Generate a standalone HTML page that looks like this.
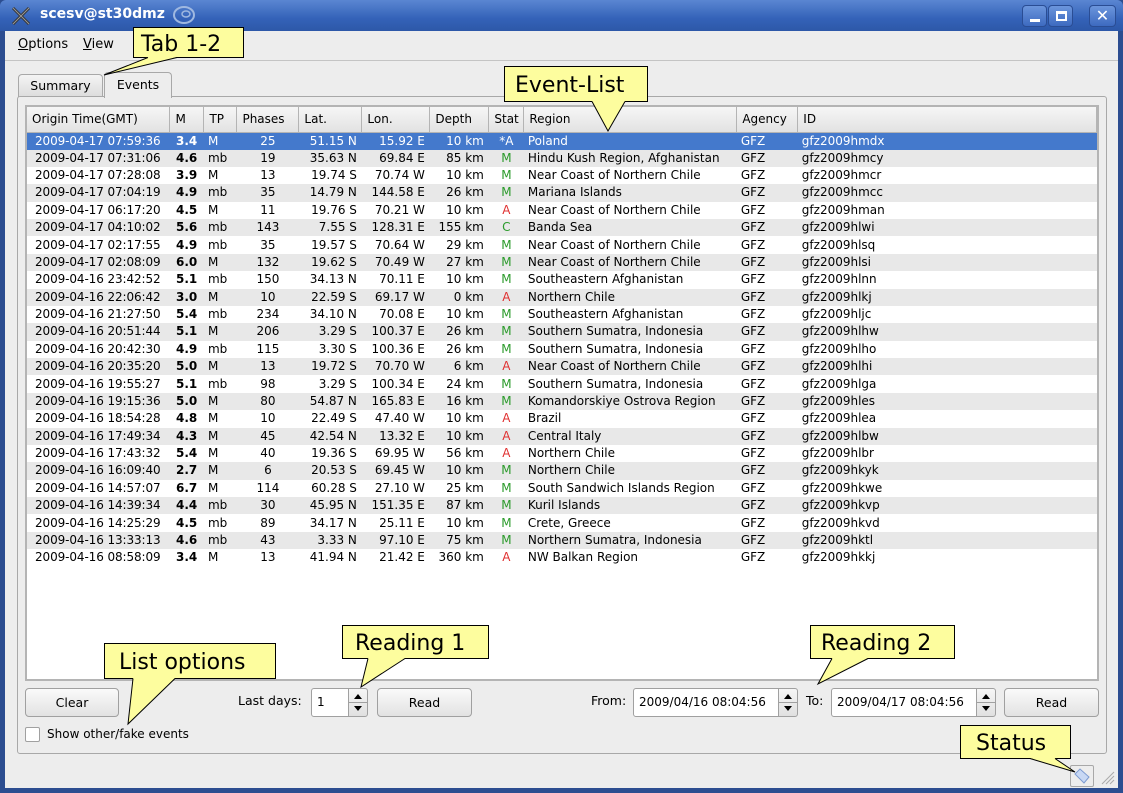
<!DOCTYPE html>
<html><head><meta charset="utf-8"><style>
*{box-sizing:border-box;margin:0;padding:0}
body{width:1123px;height:793px;overflow:hidden;background:#2c4d90;font-family:"DejaVu Sans","Liberation Sans",sans-serif;position:relative}
.abs{position:absolute}
#title{left:0;top:0;width:1123px;height:31px;background:linear-gradient(#5a86d2,#3462b8 60%,#2d58a8);border-radius:6px 6px 0 0}
#client{left:5px;top:31px;width:1113px;height:757px;background:#ededed}
.menu{font-size:13px;color:#000;top:37px}
#menuline{left:5px;top:60px;width:1113px;height:1px;background:#c4c4c4}
.tab{border:1px solid #a8a8a8;border-bottom:none;border-radius:4px 4px 0 0;font-size:12.5px;text-align:center}
#frame{left:17px;top:96px;width:1090px;height:658px;border:1px solid #a8a8a8;border-radius:3px;background:#ededed}
#tbl{left:25px;top:105px;width:1074px;height:576px;border:2px solid #b4b4b4;background:#fff;overflow:hidden}
table{border-collapse:collapse;table-layout:fixed;font-size:12px;position:absolute;left:0;top:0}
th{height:25px;font-weight:normal;text-align:left;padding-left:5px;background:linear-gradient(#f6f6f6,#e2e2e2);border-right:1px solid #b4b4b4;border-bottom:1px solid #b4b4b4;white-space:nowrap}
td{height:17.38px;white-space:nowrap;padding:0 4px;overflow:hidden;line-height:17px}
tr.o td{background:#e8e8e8}
tr.s td{background:#4479cc;color:#fff}
td.t{padding-left:8px;letter-spacing:-0.1px}
td.m{font-weight:bold;padding-left:6px}
td.c{text-align:center}
td.r{text-align:right;padding-right:5px}
td.g{color:#2a9a2a;text-align:center}
td.a{color:#e03030;text-align:center}
tr.s td.g,tr.s td.a{color:#fff}
.btn{height:29px;border:1px solid #a0a0a0;border-radius:4px;background:linear-gradient(#fafafa,#e2e2e2);font-size:12.5px;text-align:center;line-height:27px}
.inp{height:29px;border:1px solid #a0a0a0;border-radius:3px;background:#fff;font-size:12px;line-height:27px;padding-left:5px;white-space:nowrap;overflow:hidden}
.spin{width:20px;height:29px;border:1px solid #a0a0a0;border-radius:0 3px 3px 0;background:linear-gradient(#f6f6f6,#e0e0e0)}
.lbl{font-size:12.5px}
</style></head><body>
<div id="title" class="abs"></div>
<svg class="abs" style="left:10px;top:5px" width="22" height="22"><path d="M3 3 L19 19 M19 3 L3 19" stroke="#333" stroke-width="3"/><path d="M3 3 L19 19 M19 3 L3 19" stroke="#999" stroke-width="1"/></svg>
<div class="abs" style="left:40px;top:6px;color:#fff;font-weight:bold;font-size:14px">scesv@st30dmz</div>
<svg class="abs" style="left:172px;top:5px" width="24" height="20"><ellipse cx="12" cy="10" rx="10" ry="8" fill="none" stroke="#9fb8e0" stroke-width="2"/><ellipse cx="14" cy="9" rx="4" ry="3" fill="none" stroke="#9fb8e0" stroke-width="1.5"/></svg>
<div class="abs" style="left:1022px;top:5px;width:25px;height:22px;border:1px solid #2a4d94;border-radius:4px;background:linear-gradient(#6b95dc,#3d6ac0)"><div style="position:absolute;left:7px;top:13px;width:10px;height:3px;background:#fff"></div></div>
<div class="abs" style="left:1048px;top:5px;width:25px;height:22px;border:1px solid #2a4d94;border-radius:4px;background:linear-gradient(#6b95dc,#3d6ac0)"><div style="position:absolute;left:7px;top:5px;width:11px;height:10px;border:2px solid #fff;border-top-width:3px"></div></div>
<div class="abs" style="left:1089px;top:5px;width:27px;height:22px;border:1px solid #2a4d94;border-radius:4px;background:linear-gradient(#6b95dc,#3d6ac0);color:#fff;font-weight:bold;font-size:16px;text-align:center;line-height:20px">✕</div>
<div id="client" class="abs"></div>
<div class="abs menu" style="left:18px"><u>O</u>ptions</div>
<div class="abs menu" style="left:83px"><u>V</u>iew</div>
<div id="menuline" class="abs"></div>
<div class="abs tab" style="left:18px;top:74px;width:85px;height:23px;background:linear-gradient(#f4f4f4,#dcdcdc);line-height:22px">Summary</div>
<div id="frame" class="abs"></div>
<div class="abs tab" style="left:104px;top:72px;width:68px;height:26px;background:#ededed;line-height:23px">Events</div>
<div id="tbl" class="abs">
<table>
<colgroup><col style="width:143px"><col style="width:34px"><col style="width:33px"><col style="width:62px"><col style="width:63px"><col style="width:68px"><col style="width:59px"><col style="width:35px"><col style="width:213px"><col style="width:61px"><col style="width:299px"></colgroup>
<tr><th>Origin Time(GMT)</th><th>M</th><th>TP</th><th>Phases</th><th>Lat.</th><th>Lon.</th><th>Depth</th><th>Stat</th><th>Region</th><th>Agency</th><th>ID</th></tr>
<tr class="s"><td class="t">2009-04-17 07:59:36</td><td class="m">3.4</td><td>M</td><td class="c">25</td><td class="r">51.15 N</td><td class="r">15.92 E</td><td class="r">10 km</td><td class="c">*A</td><td>Poland</td><td>GFZ</td><td>gfz2009hmdx</td></tr>
<tr class="o"><td class="t">2009-04-17 07:31:06</td><td class="m">4.6</td><td>mb</td><td class="c">19</td><td class="r">35.63 N</td><td class="r">69.84 E</td><td class="r">85 km</td><td class="g">M</td><td>Hindu Kush Region, Afghanistan</td><td>GFZ</td><td>gfz2009hmcy</td></tr>
<tr><td class="t">2009-04-17 07:28:08</td><td class="m">3.9</td><td>M</td><td class="c">13</td><td class="r">19.74 S</td><td class="r">70.74 W</td><td class="r">10 km</td><td class="g">M</td><td>Near Coast of Northern Chile</td><td>GFZ</td><td>gfz2009hmcr</td></tr>
<tr class="o"><td class="t">2009-04-17 07:04:19</td><td class="m">4.9</td><td>mb</td><td class="c">35</td><td class="r">14.79 N</td><td class="r">144.58 E</td><td class="r">26 km</td><td class="g">M</td><td>Mariana Islands</td><td>GFZ</td><td>gfz2009hmcc</td></tr>
<tr><td class="t">2009-04-17 06:17:20</td><td class="m">4.5</td><td>M</td><td class="c">11</td><td class="r">19.76 S</td><td class="r">70.21 W</td><td class="r">10 km</td><td class="a">A</td><td>Near Coast of Northern Chile</td><td>GFZ</td><td>gfz2009hman</td></tr>
<tr class="o"><td class="t">2009-04-17 04:10:02</td><td class="m">5.6</td><td>mb</td><td class="c">143</td><td class="r">7.55 S</td><td class="r">128.31 E</td><td class="r">155 km</td><td class="g">C</td><td>Banda Sea</td><td>GFZ</td><td>gfz2009hlwi</td></tr>
<tr><td class="t">2009-04-17 02:17:55</td><td class="m">4.9</td><td>mb</td><td class="c">35</td><td class="r">19.57 S</td><td class="r">70.64 W</td><td class="r">29 km</td><td class="g">M</td><td>Near Coast of Northern Chile</td><td>GFZ</td><td>gfz2009hlsq</td></tr>
<tr class="o"><td class="t">2009-04-17 02:08:09</td><td class="m">6.0</td><td>M</td><td class="c">132</td><td class="r">19.62 S</td><td class="r">70.49 W</td><td class="r">27 km</td><td class="g">M</td><td>Near Coast of Northern Chile</td><td>GFZ</td><td>gfz2009hlsi</td></tr>
<tr><td class="t">2009-04-16 23:42:52</td><td class="m">5.1</td><td>mb</td><td class="c">150</td><td class="r">34.13 N</td><td class="r">70.11 E</td><td class="r">10 km</td><td class="g">M</td><td>Southeastern Afghanistan</td><td>GFZ</td><td>gfz2009hlnn</td></tr>
<tr class="o"><td class="t">2009-04-16 22:06:42</td><td class="m">3.0</td><td>M</td><td class="c">10</td><td class="r">22.59 S</td><td class="r">69.17 W</td><td class="r">0 km</td><td class="a">A</td><td>Northern Chile</td><td>GFZ</td><td>gfz2009hlkj</td></tr>
<tr><td class="t">2009-04-16 21:27:50</td><td class="m">5.4</td><td>mb</td><td class="c">234</td><td class="r">34.10 N</td><td class="r">70.08 E</td><td class="r">10 km</td><td class="g">M</td><td>Southeastern Afghanistan</td><td>GFZ</td><td>gfz2009hljc</td></tr>
<tr class="o"><td class="t">2009-04-16 20:51:44</td><td class="m">5.1</td><td>M</td><td class="c">206</td><td class="r">3.29 S</td><td class="r">100.37 E</td><td class="r">26 km</td><td class="g">M</td><td>Southern Sumatra, Indonesia</td><td>GFZ</td><td>gfz2009hlhw</td></tr>
<tr><td class="t">2009-04-16 20:42:30</td><td class="m">4.9</td><td>mb</td><td class="c">115</td><td class="r">3.30 S</td><td class="r">100.36 E</td><td class="r">26 km</td><td class="g">M</td><td>Southern Sumatra, Indonesia</td><td>GFZ</td><td>gfz2009hlho</td></tr>
<tr class="o"><td class="t">2009-04-16 20:35:20</td><td class="m">5.0</td><td>M</td><td class="c">13</td><td class="r">19.72 S</td><td class="r">70.70 W</td><td class="r">6 km</td><td class="a">A</td><td>Near Coast of Northern Chile</td><td>GFZ</td><td>gfz2009hlhi</td></tr>
<tr><td class="t">2009-04-16 19:55:27</td><td class="m">5.1</td><td>mb</td><td class="c">98</td><td class="r">3.29 S</td><td class="r">100.34 E</td><td class="r">24 km</td><td class="g">M</td><td>Southern Sumatra, Indonesia</td><td>GFZ</td><td>gfz2009hlga</td></tr>
<tr class="o"><td class="t">2009-04-16 19:15:36</td><td class="m">5.0</td><td>M</td><td class="c">80</td><td class="r">54.87 N</td><td class="r">165.83 E</td><td class="r">16 km</td><td class="g">M</td><td>Komandorskiye Ostrova Region</td><td>GFZ</td><td>gfz2009hles</td></tr>
<tr><td class="t">2009-04-16 18:54:28</td><td class="m">4.8</td><td>M</td><td class="c">10</td><td class="r">22.49 S</td><td class="r">47.40 W</td><td class="r">10 km</td><td class="a">A</td><td>Brazil</td><td>GFZ</td><td>gfz2009hlea</td></tr>
<tr class="o"><td class="t">2009-04-16 17:49:34</td><td class="m">4.3</td><td>M</td><td class="c">45</td><td class="r">42.54 N</td><td class="r">13.32 E</td><td class="r">10 km</td><td class="a">A</td><td>Central Italy</td><td>GFZ</td><td>gfz2009hlbw</td></tr>
<tr><td class="t">2009-04-16 17:43:32</td><td class="m">5.4</td><td>M</td><td class="c">40</td><td class="r">19.36 S</td><td class="r">69.95 W</td><td class="r">56 km</td><td class="a">A</td><td>Northern Chile</td><td>GFZ</td><td>gfz2009hlbr</td></tr>
<tr class="o"><td class="t">2009-04-16 16:09:40</td><td class="m">2.7</td><td>M</td><td class="c">6</td><td class="r">20.53 S</td><td class="r">69.45 W</td><td class="r">10 km</td><td class="g">M</td><td>Northern Chile</td><td>GFZ</td><td>gfz2009hkyk</td></tr>
<tr><td class="t">2009-04-16 14:57:07</td><td class="m">6.7</td><td>M</td><td class="c">114</td><td class="r">60.28 S</td><td class="r">27.10 W</td><td class="r">25 km</td><td class="g">M</td><td>South Sandwich Islands Region</td><td>GFZ</td><td>gfz2009hkwe</td></tr>
<tr class="o"><td class="t">2009-04-16 14:39:34</td><td class="m">4.4</td><td>mb</td><td class="c">30</td><td class="r">45.95 N</td><td class="r">151.35 E</td><td class="r">87 km</td><td class="g">M</td><td>Kuril Islands</td><td>GFZ</td><td>gfz2009hkvp</td></tr>
<tr><td class="t">2009-04-16 14:25:29</td><td class="m">4.5</td><td>mb</td><td class="c">89</td><td class="r">34.17 N</td><td class="r">25.11 E</td><td class="r">10 km</td><td class="g">M</td><td>Crete, Greece</td><td>GFZ</td><td>gfz2009hkvd</td></tr>
<tr class="o"><td class="t">2009-04-16 13:33:13</td><td class="m">4.6</td><td>mb</td><td class="c">43</td><td class="r">3.33 N</td><td class="r">97.10 E</td><td class="r">75 km</td><td class="g">M</td><td>Northern Sumatra, Indonesia</td><td>GFZ</td><td>gfz2009hktl</td></tr>
<tr><td class="t">2009-04-16 08:58:09</td><td class="m">3.4</td><td>M</td><td class="c">13</td><td class="r">41.94 N</td><td class="r">21.42 E</td><td class="r">360 km</td><td class="a">A</td><td>NW Balkan Region</td><td>GFZ</td><td>gfz2009hkkj</td></tr>
</table>
</div>
<div class="abs btn" style="left:25px;top:688px;width:94px">Clear</div>
<div class="abs lbl" style="left:238px;top:693px">Last days:</div>
<div class="abs inp" style="left:311px;top:688px;width:40px">1</div>
<div class="abs spin" style="left:348px;top:688px"><svg width="18" height="27"><path d="M5 10 L9 5 L13 10Z M5 17 L9 22 L13 17Z" fill="#000"/><line x1="0" y1="13.5" x2="18" y2="13.5" stroke="#a0a0a0"/></svg></div>
<div class="abs btn" style="left:377px;top:688px;width:95px">Read</div>
<div class="abs lbl" style="left:591px;top:693px">From:</div>
<div class="abs inp" style="left:633px;top:688px;width:148px">2009/04/16 08:04:56</div>
<div class="abs spin" style="left:778px;top:688px"><svg width="18" height="27"><path d="M5 10 L9 5 L13 10Z M5 17 L9 22 L13 17Z" fill="#000"/><line x1="0" y1="13.5" x2="18" y2="13.5" stroke="#a0a0a0"/></svg></div>
<div class="abs lbl" style="left:806px;top:693px">To:</div>
<div class="abs inp" style="left:831px;top:688px;width:148px">2009/04/17 08:04:56</div>
<div class="abs spin" style="left:976px;top:688px"><svg width="18" height="27"><path d="M5 10 L9 5 L13 10Z M5 17 L9 22 L13 17Z" fill="#000"/><line x1="0" y1="13.5" x2="18" y2="13.5" stroke="#a0a0a0"/></svg></div>
<div class="abs btn" style="left:1004px;top:688px;width:95px">Read</div>
<div class="abs" style="left:25px;top:727px;width:15px;height:15px;border:1px solid #a0a0a0;border-radius:2px;background:#fff"></div>
<div class="abs lbl" style="left:47px;top:727px;font-size:12px">Show other/fake events</div>
<div class="abs" style="left:1070px;top:765px;width:24px;height:22px;border:1px solid #a8a8a8;border-radius:2px"><svg width="22" height="20"><path d="M4 8 L9 3 L18 11 L13 17Z" fill="#c8d8f4" stroke="#7c9ad0"/></svg></div>
<svg class="abs" style="left:1100px;top:770px" width="16" height="16"><path d="M14 2 L2 14 M14 6 L6 14 M14 10 L10 14" stroke="#aaa"/></svg>
<svg class="abs" style="left:0;top:0" width="1123" height="793">
<g fill="#fdfd9e" stroke="#000" stroke-width="1">
<rect x="133.5" y="27.5" width="110" height="30"/>
<rect x="504.5" y="66.5" width="143" height="35"/>
<rect x="104.5" y="643.5" width="171" height="35"/>
<rect x="342.5" y="625.5" width="146" height="33"/>
<rect x="810.5" y="625.5" width="144" height="33"/>
<rect x="960.5" y="725.5" width="110" height="33"/>
</g>
<g fill="#fdfd9e" stroke="none">
<polygon points="148,57 177,57 104,75"/>
<polygon points="592,101 625,101 608,131"/>
<polygon points="133,678 175,678 128,724"/>
<polygon points="368,658 405,658 361,687"/>
<polygon points="832,658 868,658 818,684"/>
<polygon points="1030,758 1055,758 1075,772"/>
</g>
<g fill="none" stroke="#000" stroke-width="1">
<polyline points="148,57.5 104,75 177,57.5"/>
<polyline points="592,101.5 608,131 625,101.5"/>
<polyline points="133,678.5 128,724 175,678.5"/>
<polyline points="368,658.5 361,687 405,658.5"/>
<polyline points="832,658.5 818,684 868,658.5"/>
<polyline points="1030,758.5 1075,772 1055,758.5"/>
</g>
<g font-family="DejaVu Sans, sans-serif" font-size="22" fill="#000">
<text x="141" y="51">Tab 1-2</text>
<text x="515" y="92">Event-List</text>
<text x="119" y="669">List options</text>
<text x="355" y="650">Reading 1</text>
<text x="821" y="650">Reading 2</text>
<text x="976" y="750">Status</text>
</g>
</svg>
</body></html>
